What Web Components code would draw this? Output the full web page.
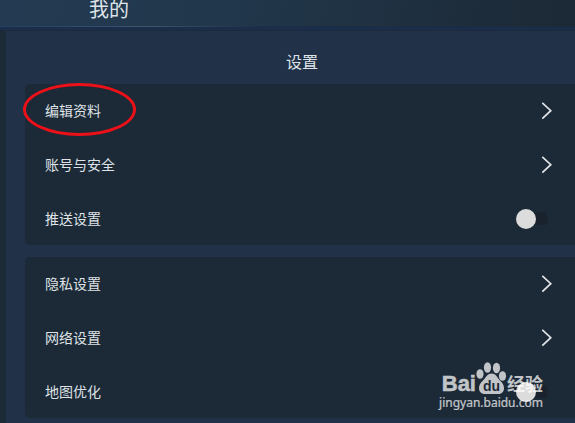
<!DOCTYPE html>
<html lang="zh-CN">
<head>
<meta charset="utf-8">
<title>设置</title>
<style>
html, body { margin: 0; height: 100%; overflow: hidden; }
body { background: #1c2936; color: #dfe3e7; font-family: "Noto Sans CJK SC", sans-serif; }
</style>
</head>
<body>
<settings-page>
  <app-header slot="header">我的</app-header>
  <settings-card>
    <nav-row>编辑资料<callout-ring slot="mark"></callout-ring></nav-row>
    <nav-row>账号与安全</nav-row>
    <toggle-row label="推送设置"></toggle-row>
  </settings-card>
  <settings-card>
    <nav-row>隐私设置</nav-row>
    <nav-row>网络设置</nav-row>
    <toggle-row label="地图优化"></toggle-row>
  </settings-card>
  <site-watermark slot="overlay"></site-watermark>
</settings-page>
<script>
function define(name, html, setup) {
  customElements.define(name, class extends HTMLElement {
    constructor() {
      super();
      this.attachShadow({ mode: "open" }).innerHTML = html;
    }
    connectedCallback() { if (setup) setup(this); }
  });
}

define("settings-page", `
<style>
:host { display: flex; flex-direction: column; height: 100vh; position: relative; overflow: hidden; }
main { flex: 1; margin-left: 6px; padding: 0 0 0 19px; background: #213148; display: flex; flex-direction: column; gap: 12px; }
h2 { margin: 0 0 -12px; padding: 0 0 0 4px; height: 53px; line-height: 60px; font-size: 16px; font-weight: 400; text-align: center; }
</style>
<slot name="header"></slot>
<main><h2>设置</h2><slot></slot></main>
<slot name="overlay"></slot>`);

define("app-header", `
<style>
:host { display: block; flex: none; height: 27px; background: linear-gradient(100deg, #233a52, #21374b 40%, #1c2936 98%); border-bottom: 3px solid #1a2e4c; box-shadow: 0 1px #1c2a3b; position: relative; margin-bottom: 1px; }
:host::after { content: ""; position: absolute; left: 0; right: 0; bottom: 0; height: 1px; background: linear-gradient(90deg, #24405c, #3e566c 25%, #1e2f45 45%, #1c2936); }
h1 { margin: 0; padding-left: 89px; font-size: 20px; line-height: 18px; font-weight: 400; }
</style>
<h1><slot></slot></h1>`);

define("settings-card", `
<style>
:host { display: block; flex: none; background: #1c2936; border-radius: 5px 0 0 5px; }
</style>
<slot></slot>`);

define("nav-row", `
<style>
:host { display: block; position: relative; }
button { all: unset; box-sizing: border-box; width: 100%; height: 54px; padding: 0 23px 0 20px; display: flex; align-items: center; justify-content: space-between; font-size: 14px; cursor: pointer; }
span { padding-bottom: 2px; }
svg { display: block; }
</style>
<button type="button"><span><slot></slot></span>
<svg width="11" height="18" viewBox="0 0 11 18" fill="none" stroke="#e3e6e8" stroke-width="1.700" aria-hidden="true"><path d="M1.300 0.800 L9.800 8.700 L1.300 16.700"/></svg></button>
<slot name="mark"></slot>`);

define("toggle-row", `
<style>
:host { display: block; }
label { height: 53px; padding: 0 27px 0 20px; display: flex; align-items: center; justify-content: space-between; font-size: 14px; }
span { padding-bottom: 2px; }
input { appearance: none; margin: 0; width: 32px; height: 20px; display: flex; align-items: center; background: linear-gradient(#19222d, #19222d) 100% 50% / 26px 13px no-repeat; border-radius: 10px; }
input::before { content: ""; width: 20px; height: 20px; border-radius: 50%; background: #dcdcdc; }
input:checked { justify-content: flex-end; }
</style>
<label><span></span><input type="checkbox" role="switch"></label>`,
host => { host.shadowRoot.querySelector("span").textContent = host.getAttribute("label"); });

define("callout-ring", `
<style>
:host { position: absolute; left: -2px; top: -1px; width: 113px; height: 53px; box-sizing: border-box; border: 3px solid #ec1119; border-radius: 50%; pointer-events: none; }
</style>`);

define("site-watermark", `
<style>
:host { position: absolute; right: 32px; bottom: 12px; color: #fff; opacity: 0.73; pointer-events: none; }
div { display: flex; align-items: flex-end; justify-content: flex-end; height: 34px; }
b { font: 700 22px/22px "Liberation Sans", sans-serif; -webkit-text-stroke: 0.5px; }
strong { font: 700 18px/24px "Noto Sans CJK SC", sans-serif; }
p { margin: 0; font: 12px/16px "Noto Sans", sans-serif; text-align: right; -webkit-text-stroke: 0.2px; }
svg { display: block; }
text { font: 700 14px "Liberation Sans", sans-serif; fill: #1c2936; }
</style>
<div><b>Bai</b>
<svg width="31" height="34" viewBox="0 0 31 34" fill="currentColor" aria-hidden="true"><ellipse cx="4" cy="13" rx="3.600" ry="4.800"/><ellipse cx="11.500" cy="6.500" rx="3.600" ry="5.200"/><ellipse cx="20.500" cy="7" rx="3.600" ry="5.200"/><ellipse cx="26.500" cy="15" rx="3.600" ry="4.800"/><path d="M15.500 12.500c5 0 5.500 4 8.500 7 2.500 2.500 4 4.500 4 7.500 0 3.500-2 6-5.500 6H9c-4 0-6-2.500-6-6 0-3 1.500-5 4-7.500 3-3 4-7 8.500-7z"/><text x="15.500" y="30" text-anchor="middle">du</text></svg>
<strong>经验</strong></div>
<p>jingyan.baidu.com</p>`);
</script>
</body>
</html>
